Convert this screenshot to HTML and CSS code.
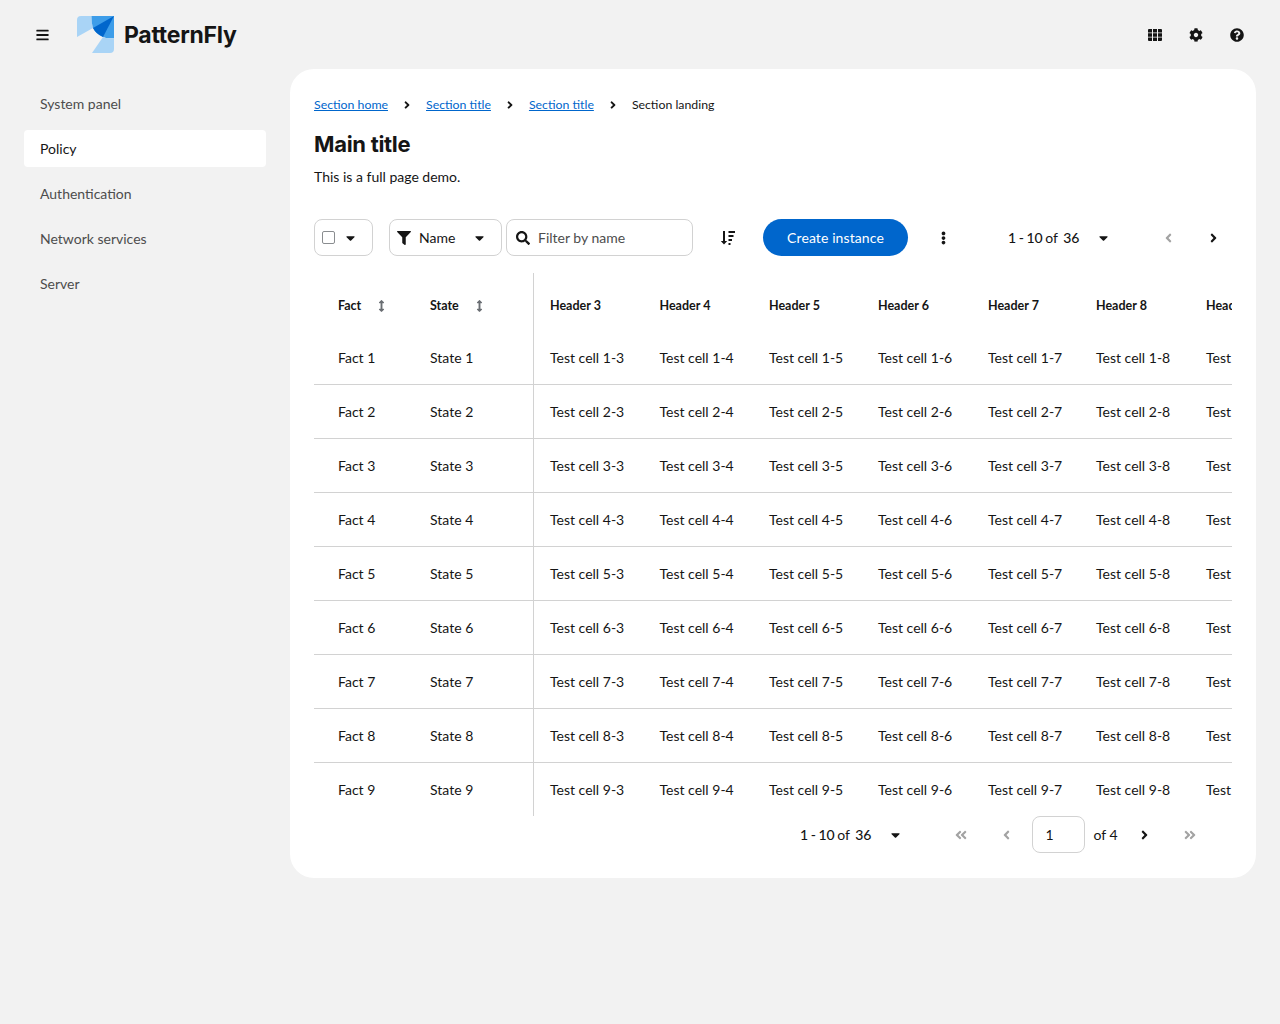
FILE: index.html
```html
<!DOCTYPE html>
<html lang="en">
<head>
<meta charset="UTF-8">
<meta name="viewport" content="width=device-width, initial-scale=1.0">
<title>PatternFly - Main title</title>
<link rel="stylesheet" href="styles.css">
</head>
<body>
<svg class="sprites" xmlns="http://www.w3.org/2000/svg">
    <symbol id="i-bars" viewBox="0 0 448 512"><path d="M16 132h416c8.837 0 16-7.163 16-16V76c0-8.837-7.163-16-16-16H16C7.163 60 0 67.163 0 76v40c0 8.837 7.163 16 16 16zm0 160h416c8.837 0 16-7.163 16-16v-40c0-8.837-7.163-16-16-16H16c-8.837 0-16 7.163-16 16v40c0 8.837 7.163 16 16 16zm0 160h416c8.837 0 16-7.163 16-16v-40c0-8.837-7.163-16-16-16H16c-8.837 0-16 7.163-16 16v40c0 8.837 7.163 16 16 16z"/></symbol>
    <symbol id="i-grid" viewBox="0 0 14 12"><path d="M0 1a1 1 0 0 1 1-1h3v3.4H0zM5 0h4v3.4H5zM10 0h3a1 1 0 0 1 1 1v2.400h-4zM0 4.300h4v3.400H0zM5 4.300h4v3.400H5zM10 4.300h4v3.400h-4zM0 8.600h4V12H1a1 1 0 0 1-1-1zM5 8.600h4V12H5zM10 8.600h4V11a1 1 0 0 1-1 1h-3z"/></symbol>
    <symbol id="i-cog" viewBox="0 0 512 512"><path d="M487.4 315.7l-42.6-24.6c4.3-23.2 4.3-47 0-70.2l42.6-24.6c4.9-2.8 7.1-8.6 5.5-14-11.1-35.6-30-67.8-54.7-94.6-3.8-4.1-10-5.1-14.8-2.3L380.8 110c-17.9-15.4-38.5-27.3-60.8-35.1V25.8c0-5.6-3.9-10.5-9.4-11.7-36.7-8.2-74.3-7.8-109.2 0-5.5 1.2-9.4 6.1-9.4 11.7V75c-22.2 7.9-42.8 19.8-60.8 35.1L88.7 85.5c-4.9-2.8-11-1.9-14.8 2.3-24.7 26.7-43.6 58.9-54.7 94.6-1.7 5.4.6 11.2 5.5 14L67.3 221c-4.3 23.2-4.3 47 0 70.2l-42.6 24.6c-4.9 2.8-7.1 8.6-5.5 14 11.1 35.6 30 67.8 54.7 94.6 3.8 4.1 10 5.1 14.8 2.3l42.6-24.6c17.9 15.4 38.5 27.3 60.8 35.1v49.2c0 5.6 3.9 10.5 9.4 11.7 36.7 8.2 74.3 7.8 109.2 0 5.5-1.2 9.4-6.1 9.4-11.7v-49.2c22.2-7.9 42.8-19.8 60.8-35.1l42.6 24.6c4.9 2.8 11 1.9 14.8-2.3 24.7-26.7 43.6-58.9 54.7-94.6 1.5-5.5-.7-11.3-5.6-14.1zM256 336c-44.1 0-80-35.9-80-80s35.9-80 80-80 80 35.9 80 80-35.9 80-80 80z"/></symbol>
    <symbol id="i-help" viewBox="0 0 512 512"><path d="M504 256c0 136.997-111.043 248-248 248S8 392.997 8 256C8 119.083 119.043 8 256 8s248 111.083 248 248zM262.655 90c-54.497 0-89.255 22.957-116.549 63.758-3.536 5.286-2.353 12.415 2.715 16.258l34.699 26.31c5.205 3.947 12.621 3.008 16.665-2.122 17.864-22.658 30.113-35.797 57.303-35.797 20.429 0 45.698 13.148 45.698 32.958 0 14.976-12.363 22.667-32.534 33.976C247.128 238.528 216 254.941 216 296v4c0 6.627 5.373 12 12 12h56c6.627 0 12-5.373 12-12v-1.333c0-28.462 83.186-29.647 83.186-106.667 0-58.002-60.165-102-116.531-102zM256 338c-25.365 0-46 20.635-46 46 0 25.364 20.635 46 46 46s46-20.636 46-46c0-25.365-20.635-46-46-46z"/></symbol>
    <symbol id="i-filter" viewBox="0 0 512 512"><path d="M487.976 0H24.028C2.71 0-8.047 25.866 7.058 40.971L192 225.941V432c0 7.831 3.821 15.17 10.237 19.662l80 55.98C298.02 518.69 320 507.493 320 487.98V225.941l184.947-184.97C520.021 25.896 509.338 0 487.976 0z"/></symbol>
    <symbol id="i-search" viewBox="0 0 512 512"><path d="M505 442.7L405.3 343c-4.5-4.5-10.600-7-17-7H372c27.600-35.300 44-79.700 44-128C416 93.100 322.900 0 208 0S0 93.100 0 208s93.100 208 208 208c48.300 0 92.700-16.400 128-44v16.300c0 6.400 2.500 12.500 7 17l99.700 99.700c9.400 9.400 24.600 9.400 33.900 0l28.300-28.300c9.400-9.400 9.400-24.600.1-34zM208 336c-70.700 0-128-57.200-128-128 0-70.700 57.200-128 128-128 70.700 0 128 57.200 128 128 0 70.700-57.200 128-128 128z"/></symbol>
    <symbol id="i-caret" viewBox="0 0 320 512"><path d="M31.3 192h257.300c17.800 0 26.700 21.500 14.100 34.100L174.100 354.800c-7.800 7.800-20.500 7.800-28.300 0L17.200 226.100C4.600 213.500 13.500 192 31.300 192z"/></symbol>
    <symbol id="i-right" viewBox="0 0 256 512"><path d="M224.300 273l-136 136c-9.400 9.400-24.600 9.400-33.900 0l-22.600-22.600c-9.400-9.400-9.400-24.600 0-33.900l96.400-96.400-96.400-96.400c-9.400-9.400-9.400-24.600 0-33.900L54.300 103c9.400-9.400 24.600-9.400 33.900 0l136 136c9.500 9.400 9.500 24.600.1 34z"/></symbol>
    <symbol id="i-left" viewBox="0 0 256 512"><path d="M31.700 239l136-136c9.400-9.400 24.600-9.400 33.900 0l22.600 22.600c9.400 9.400 9.400 24.600 0 33.900L127.900 256l96.400 96.400c9.400 9.400 9.400 24.600 0 33.900L201.700 409c-9.400 9.400-24.600 9.400-33.900 0l-136-136c-9.500-9.400-9.500-24.600-.1-34z"/></symbol>
    <symbol id="i-first" viewBox="0 0 448 512"><path d="M223.700 239l136-136c9.400-9.400 24.600-9.400 33.900 0l22.600 22.600c9.400 9.400 9.400 24.600 0 33.900L319.900 256l96.400 96.400c9.400 9.400 9.400 24.600 0 33.900L393.700 409c-9.400 9.400-24.600 9.400-33.900 0l-136-136c-9.500-9.400-9.500-24.600-.1-34zm-192 34l136 136c9.400 9.400 24.600 9.400 33.900 0l22.600-22.600c9.400-9.400 9.400-24.600 0-33.900L127.900 256l96.400-96.400c9.400-9.400 9.400-24.600 0-33.900L201.700 103c-9.400-9.400-24.600-9.400-33.900 0l-136 136c-9.500 9.400-9.500 24.600-.1 34z"/></symbol>
    <symbol id="i-last" viewBox="0 0 448 512"><path d="M224.300 273l-136 136c-9.400 9.400-24.600 9.400-33.900 0l-22.600-22.600c-9.400-9.400-9.400-24.600 0-33.900l96.400-96.400-96.400-96.400c-9.400-9.400-9.400-24.600 0-33.900L54.300 103c9.400-9.400 24.600-9.400 33.900 0l136 136c9.500 9.400 9.500 24.600.1 34zm192-34l-136-136c-9.400-9.400-24.600-9.400-33.900 0l-22.600 22.600c-9.400 9.400-9.400 24.600 0 33.900l96.400 96.400-96.400 96.400c-9.400 9.400-9.400 24.600 0 33.900l22.600 22.600c9.400 9.400 24.600 9.400 33.900 0l136-136c9.400-9.200 9.400-24.400 0-33.800z"/></symbol>
    <symbol id="i-kebab" viewBox="0 0 192 512"><path d="M96 184c39.800 0 72 32.200 72 72s-32.200 72-72 72-72-32.200-72-72 32.200-72 72-72zM24 80c0 39.800 32.200 72 72 72s72-32.200 72-72S135.800 8 96 8 24 40.200 24 80zm0 352c0 39.800 32.200 72 72 72s72-32.200 72-72-32.200-72-72-72-72 32.200-72 72z"/></symbol>
    <symbol id="i-sort" viewBox="0 0 256 512"><path d="M214.059 377.941H168V134.059h46.059c21.382 0 32.090-25.851 16.971-40.971L144.971 7.029c-9.373-9.373-24.568-9.373-33.941 0L24.971 93.088c-15.119 15.119-4.411 40.971 16.971 40.971H88v243.882H41.941c-21.382 0-32.090 25.851-16.971 40.971l86.059 86.059c9.373 9.373 24.568 9.373 33.941 0l86.059-86.059c15.119-15.120 4.411-40.971-16.971-40.971z"/></symbol>
    <symbol id="i-sort-list" viewBox="0 0 14 14"><path d="M2 0h2v10h2.200L3 13.600 -.2 10H2zM7.500 0H14v2H7.500zM7.500 4h5v2h-5zM7.500 8H11v2H7.500zM7.500 12h2v2h-2z"/></symbol>
</svg>

<header class="masthead">
    <button class="icon-btn nav-toggle"><svg class="icon icon-bars"><use href="#i-bars"/></svg></button>
    <a class="brand" href="#">
        <svg class="brand-mark" viewBox="0 0 37 37" xmlns="http://www.w3.org/2000/svg">
            <path fill="#a9d4f6" d="M4 0H14.500Q14.500 7 16 12L0 21V4a4 4 0 0 1 4-4z"/>
            <path fill="#3d9de9" d="M14.500 0H37V22Q30 23 26 21Q19 18 16 12Q14.500 7 14.500 0z"/>
            <path fill="#0066cc" d="M37 0 16 12Q19 18 26 21z"/>
            <path fill="#a9d4f6" d="M26 21Q30 23 37 22V33a4 4 0 0 1-4 4H15z"/>
        </svg>
        <span class="brand-name">PatternFly</span>
    </a>
    <div class="masthead-tools">
        <svg class="icon tool-icon"><use href="#i-grid"/></svg>
        <svg class="icon tool-icon"><use href="#i-cog"/></svg>
        <svg class="icon tool-icon"><use href="#i-help"/></svg>
    </div>
</header>

<div class="page-body">
    <nav class="sidebar">
        <a class="nav-item" href="#">System panel</a>
        <a class="nav-item active" href="#">Policy</a>
        <a class="nav-item" href="#">Authentication</a>
        <a class="nav-item" href="#">Network services</a>
        <a class="nav-item" href="#">Server</a>
    </nav>

    <main class="card">
        <ol class="breadcrumb">
            <li><a href="#">Section home</a></li>
            <li class="crumb-sep"><svg class="icon"><use href="#i-right"/></svg></li>
            <li><a href="#">Section title</a></li>
            <li class="crumb-sep"><svg class="icon"><use href="#i-right"/></svg></li>
            <li><a href="#">Section title</a></li>
            <li class="crumb-sep"><svg class="icon"><use href="#i-right"/></svg></li>
            <li>Section landing</li>
        </ol>
        <h1 class="page-title">Main title</h1>
        <p class="page-desc">This is a full page demo.</p>

        <div class="toolbar">
            <div class="select-box bulk-select">
                <span class="checkbox"></span>
                <svg class="icon caret"><use href="#i-caret"/></svg>
            </div>
            <div class="select-box filter-select">
                <svg class="icon filter-icon"><use href="#i-filter"/></svg>
                <span class="filter-label">Name</span>
                <svg class="icon caret"><use href="#i-caret"/></svg>
            </div>
            <div class="select-box search-box">
                <svg class="icon search-icon"><use href="#i-search"/></svg>
                <span class="placeholder">Filter by name</span>
            </div>
            <svg class="icon sort-list"><use href="#i-sort-list"/></svg>
            <button class="btn-primary">Create instance</button>
            <svg class="icon kebab"><use href="#i-kebab"/></svg>
            <div class="page-count top-count"><b>1 - 10</b> of <b class="total">36</b></div>
            <svg class="icon caret top-caret"><use href="#i-caret"/></svg>
            <svg class="icon arrow disabled top-prev"><use href="#i-left"/></svg>
            <svg class="icon arrow top-next"><use href="#i-right"/></svg>
        </div>

        <div class="table-wrap">
            <table class="data-table">
                <colgroup>
                    <col class="col-fact"><col class="col-state">
                    <col class="col-a"><col class="col-a"><col class="col-b"><col class="col-c"><col class="col-d"><col class="col-c"><col class="col-c">
                </colgroup>
                <thead>
                    <tr>
                        <th class="pin">Fact<svg class="icon th-sort"><use href="#i-sort"/></svg></th>
                        <th class="pin pin-last">State<svg class="icon th-sort"><use href="#i-sort"/></svg></th>
                        <th>Header 3</th><th>Header 4</th><th>Header 5</th><th>Header 6</th><th>Header 7</th><th>Header 8</th><th>Header 9</th>
                    </tr>
                </thead>
                <tbody>
                    <tr><td class="pin">Fact 1</td><td class="pin pin-last">State 1</td><td>Test cell 1-3</td><td>Test cell 1-4</td><td>Test cell 1-5</td><td>Test cell 1-6</td><td>Test cell 1-7</td><td>Test cell 1-8</td><td>Test cell 1-9</td></tr>
                    <tr><td class="pin">Fact 2</td><td class="pin pin-last">State 2</td><td>Test cell 2-3</td><td>Test cell 2-4</td><td>Test cell 2-5</td><td>Test cell 2-6</td><td>Test cell 2-7</td><td>Test cell 2-8</td><td>Test cell 2-9</td></tr>
                    <tr><td class="pin">Fact 3</td><td class="pin pin-last">State 3</td><td>Test cell 3-3</td><td>Test cell 3-4</td><td>Test cell 3-5</td><td>Test cell 3-6</td><td>Test cell 3-7</td><td>Test cell 3-8</td><td>Test cell 3-9</td></tr>
                    <tr><td class="pin">Fact 4</td><td class="pin pin-last">State 4</td><td>Test cell 4-3</td><td>Test cell 4-4</td><td>Test cell 4-5</td><td>Test cell 4-6</td><td>Test cell 4-7</td><td>Test cell 4-8</td><td>Test cell 4-9</td></tr>
                    <tr><td class="pin">Fact 5</td><td class="pin pin-last">State 5</td><td>Test cell 5-3</td><td>Test cell 5-4</td><td>Test cell 5-5</td><td>Test cell 5-6</td><td>Test cell 5-7</td><td>Test cell 5-8</td><td>Test cell 5-9</td></tr>
                    <tr><td class="pin">Fact 6</td><td class="pin pin-last">State 6</td><td>Test cell 6-3</td><td>Test cell 6-4</td><td>Test cell 6-5</td><td>Test cell 6-6</td><td>Test cell 6-7</td><td>Test cell 6-8</td><td>Test cell 6-9</td></tr>
                    <tr><td class="pin">Fact 7</td><td class="pin pin-last">State 7</td><td>Test cell 7-3</td><td>Test cell 7-4</td><td>Test cell 7-5</td><td>Test cell 7-6</td><td>Test cell 7-7</td><td>Test cell 7-8</td><td>Test cell 7-9</td></tr>
                    <tr><td class="pin">Fact 8</td><td class="pin pin-last">State 8</td><td>Test cell 8-3</td><td>Test cell 8-4</td><td>Test cell 8-5</td><td>Test cell 8-6</td><td>Test cell 8-7</td><td>Test cell 8-8</td><td>Test cell 8-9</td></tr>
                    <tr><td class="pin">Fact 9</td><td class="pin pin-last">State 9</td><td>Test cell 9-3</td><td>Test cell 9-4</td><td>Test cell 9-5</td><td>Test cell 9-6</td><td>Test cell 9-7</td><td>Test cell 9-8</td><td>Test cell 9-9</td></tr>
                </tbody>
            </table>
        </div>

        <div class="pager">
            <div class="page-count"><b>1 - 10</b> of <b class="total">36</b></div>
            <svg class="icon caret pager-caret"><use href="#i-caret"/></svg>
            <svg class="icon arrow-double disabled pager-first"><use href="#i-first"/></svg>
            <svg class="icon arrow disabled pager-prev"><use href="#i-left"/></svg>
            <div class="page-input">1</div>
            <span class="page-of">of 4</span>
            <svg class="icon arrow pager-next"><use href="#i-right"/></svg>
            <svg class="icon arrow-double disabled pager-last"><use href="#i-last"/></svg>
        </div>
    </main>
</div>
</body>
</html>
```

FILE: styles.css
```css
* {
    box-sizing: border-box;
}
body {
    margin: 0;
    background-color: #f2f2f2;
    color: #151515;
    font-family: 'Lato', 'Liberation Sans', sans-serif;
    font-size: 14px;
    line-height: 21px;
}
a {
    text-decoration: none;
}
.sprites {
    display: none;
}
.icon {
    display: block;
    fill: currentColor;
    flex: none;
}

/* masthead */
.masthead {
    display: flex;
    align-items: center;
    height: 69px;
    padding-left: 36px;
}
.icon-btn {
    padding: 0;
    border: none;
    background: none;
    color: #151515;
}
.icon-bars {
    width: 13px;
    height: 14px;
}
.brand {
    display: flex;
    align-items: center;
    margin-left: 28px;
    color: #151515;
}
.brand-mark {
    width: 37px;
    height: 37px;
}
.brand-name {
    margin-left: 10px;
    padding-top: 2px;
    font-family: 'Inter', 'Liberation Sans', sans-serif;
    font-size: 23px;
    font-weight: 700;
    letter-spacing: -0.25px;
}
.masthead-tools {
    display: flex;
    gap: 27px;
    margin-left: auto;
    padding-right: 36px;
}
.tool-icon {
    width: 14px;
    height: 14px;
}

/* sidebar */
.page-body {
    display: flex;
    align-items: flex-start;
}
.sidebar {
    display: flex;
    flex-direction: column;
    gap: 8px;
    width: 290px;
    padding: 16px 24px;
}
.nav-item {
    display: block;
    height: 37px;
    padding: 8px 16px;
    border-radius: 4px;
    color: #4d4d4d;
}
.nav-item.active {
    background-color: #fff;
    color: #151515;
}

/* main card */
.card {
    width: 966px;
    height: 809px;
    padding: 25px 24px 0;
    border-radius: 24px;
    background-color: #fff;
}
.breadcrumb {
    display: flex;
    align-items: center;
    height: 21px;
    margin: 0;
    padding: 0;
    list-style: none;
    font-size: 12.3px;
}
.breadcrumb a {
    color: #0066cc;
    text-decoration: underline;
}
.crumb-sep {
    margin: 0 16px;
    color: #151515;
}
.crumb-sep .icon {
    width: 6px;
    height: 12px;
}
.page-title {
    margin: 14px 0 0;
    font-family: 'Inter', 'Liberation Sans', sans-serif;
    font-size: 22px;
    font-weight: 700;
    line-height: 31px;
    letter-spacing: -0.3px;
}
.page-desc {
    margin: 6px 0 0;
}

/* toolbar */
.toolbar {
    display: flex;
    align-items: center;
    height: 37px;
    margin-top: 32px;
}
.select-box {
    display: flex;
    align-items: center;
    height: 37px;
    border: 1px solid #d2d2d2;
    border-radius: 8px;
}
.caret {
    width: 9px;
    height: 14px;
}
.bulk-select {
    width: 59px;
    padding-left: 7px;
}
.checkbox {
    width: 13px;
    height: 13px;
    border: 1px solid #8a8d90;
    border-radius: 2px;
}
.bulk-select .caret {
    margin-left: 11px;
}
.filter-select {
    width: 113px;
    margin-left: 16px;
    padding-left: 7px;
}
.filter-icon {
    width: 14px;
    height: 14px;
}
.filter-label {
    margin-left: 8px;
}
.filter-select .caret {
    margin-left: auto;
    margin-right: 17px;
}
.search-box {
    width: 187px;
    margin-left: 4px;
    padding-left: 9px;
}
.search-icon {
    width: 14px;
    height: 14px;
}
.placeholder {
    margin-left: 8px;
    color: #4d4d4d;
}
.sort-list {
    width: 14px;
    height: 14px;
    margin-left: 28px;
}
.btn-primary {
    width: 145px;
    height: 37px;
    margin-left: 28px;
    border: none;
    border-radius: 999px;
    background-color: #0066cc;
    color: #fff;
    font: inherit;
    letter-spacing: 0.1px;
}
.kebab {
    width: 5px;
    height: 14px;
    margin-left: 33px;
}
.page-count {
    word-spacing: -1px;
    white-space: nowrap;
}
.page-count b {
    font-weight: 500;
}
.page-count .total {
    margin-left: 3px;
}
.top-count {
    margin-left: 62px;
}
.top-caret {
    margin-left: 19px;
}
.arrow {
    width: 7px;
    height: 14px;
}
.arrow-double {
    width: 12px;
    height: 14px;
}
.disabled {
    color: #a3a3a3;
}
.top-prev {
    margin-left: 57px;
}
.top-next {
    margin-left: 38px;
}

/* table */
.table-wrap {
    margin-top: 17px;
    overflow: hidden;
}
.data-table {
    width: 985px;
    table-layout: fixed;
    border-collapse: separate;
    border-spacing: 0;
}
.col-fact { width: 92px; }
.col-state { width: 128px; }
.col-a { width: 109.5px; }
.col-b { width: 109px; }
.col-c { width: 110px; }
.col-d { width: 108px; }
.data-table th {
    padding: 24px 0 16px 16px;
    font-size: 12.5px;
    font-weight: 700;
    line-height: 18px;
    text-align: left;
    white-space: nowrap;
}
.data-table td {
    padding: 16px 0 16px 16px;
    border-bottom: 1px solid #d2d2d2;
    white-space: nowrap;
}
.data-table tbody tr:last-child td {
    border-bottom: none;
}
.data-table .pin {
    padding-left: 24px;
}
.data-table .pin-last {
    border-right: 1px solid #d2d2d2;
}
.th-sort {
    display: inline-block;
    width: 7px;
    height: 12px;
    margin-left: 17px;
    vertical-align: -2px;
    color: #6a6e73;
}

/* bottom pagination */
.pager {
    display: flex;
    align-items: center;
    height: 37px;
}
.pager .page-count {
    margin-left: 486px;
}
.pager-caret {
    margin-left: 19px;
}
.pager-first {
    margin-left: 55px;
}
.pager-prev {
    margin-left: 36px;
}
.page-input {
    width: 53px;
    height: 37px;
    margin-left: 22px;
    padding: 7px 13px;
    border: 1px solid #d2d2d2;
    border-radius: 8px;
}
.page-of {
    margin-left: 9px;
}
.pager-next {
    margin-left: 23px;
}
.pager-last {
    margin-left: 36px;
}
```
